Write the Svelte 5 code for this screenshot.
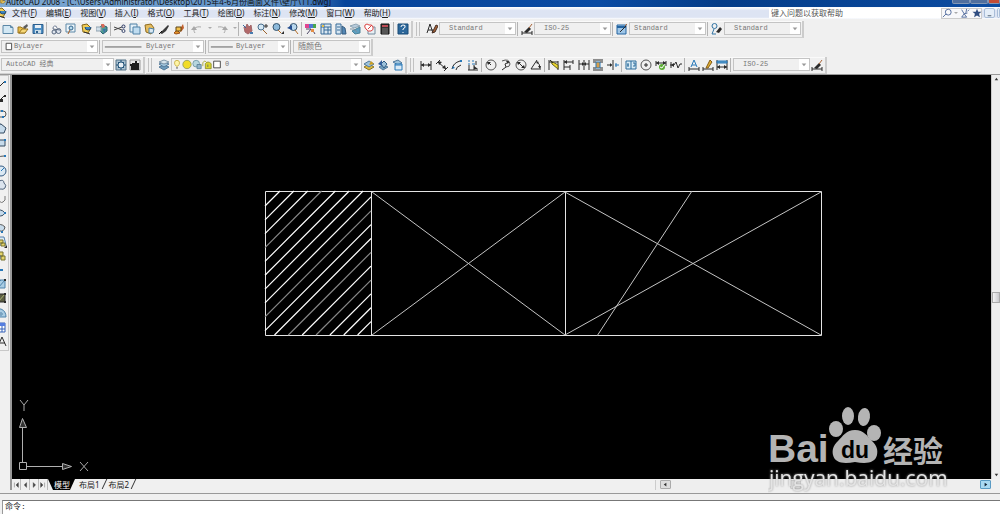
<script lang="ts">
  type Shape = [d: string, fill: string, stroke?: string];

  const ink = '#2b2b2b';
  const blue = '#2878b8';

  // every icon is drawn on a 12 x 12 grid
  const icons: Record<string, Shape[]> = {
    fresh: [['M1 2.5h7.500l2.500 2v6h-10z', '#d3e8f4', '#5b87a6'], ['M8.500 2.500v2h2.500', 'none', '#5b87a6']],
    open: [['M1 10V4h3l1 1h3v5z', '#e8bd48', '#9a741f'], ['M2 10l3-4h6l-3 4z', '#f5d778', '#9a741f'], ['M6 4l4-3 1 2-3 3z', '#5b5b5b']],
    save: [['M1 1.500h10v9h-10z', '#4f8fc4', '#2d5f8d'], ['M3 2h6v3h-6z', '#e8f0f6'], ['M3 7h6v3.500h-6z', '#c9dce8'], ['M4 8h2v2h-2z', '#2d5f8d']],
    plot: [['M3 6a2 2.500 0 1 1 4-1', '#fff', '#707d95'], ['M2 9a2 2 0 1 0 4 0a2 2 0 1 0-4 0M6 8a2.500 2.500 0 1 0 5 0a2.500 2.500 0 1 0-5 0', '#dfe5ee', '#59687f'], ['M3 6l7 1', 'none', '#59687f']],
    preview: [['M1 1h9v8h-9z', '#eaf3f8', '#5f89a8'], ['M4 5a2 2 0 1 0 4 0a2 2 0 1 0-4 0', '#b8dcf0', '#33658c'], ['M5 7l-2 4', 'none', '#a35a20']],
    publish: [['M1 2l5-1 4 4-3 5-5-1z', '#f1cd55', '#82651a'], ['M4 4a3 3 0 1 0 6 0', '#3d83bd', '#244f79'], ['M3 9l6 2', 'none', '#333']],
    globe: [['M2 6l4-4 5 2 0 4-4 3z', '#4e9a91', '#296074'], ['M0 4h5v4h-5z', '#d2e0ea', '#8fa2b0'], ['M5 1h3l1 3-3 1z', '#db6b58'], ['M7 6l3 0-2 4z', '#3b6fae']],
    cut: [['M0 4l8 3M0 7l8-3', 'none', '#444'], ['M8 4a1.500 1.500 0 1 0 3-1a1.500 1.500 0 1 0-3 1M8 8a1.500 1.500 0 1 0 3 0a1.500 1.500 0 1 0-3 0', 'none', '#3e4b72']],
    copy: [['M1 1h7v8h-7z', '#e3eff7', '#4e80a5'], ['M4 4h7v7h-7z', '#bfdcf0', '#4e80a5']],
    paste: [['M1 2l6-1 3 4-3 6-5-2z', '#e6bd5e', '#8e6b20'], ['M5 5l5 1-1 4-4 0z', '#d9e8f2', '#4e80a5']],
    brush: [['M2 10l4-4 4-4 1 1-3 5-4 3z', '#3a3a3a'], ['M1 11l3-3', 'none', '#111']],
    edit: [['M1 10l3-3 3 3-4 1z', '#e6952b', '#9a4f16'], ['M6 7l4-6 1 4-3 4z', '#c2602c'], ['M3 4h5v4h-5z', '#f3c14a', '#5d4417']],
    undo: [['M4 10c-3-4 1-7 6-6', 'none', '#a8a8a8'], ['M0 7l3-4 3 4z', '#a8a8a8']],
    redo: [['M8 10c3-4-1-7-6-6', 'none', '#a8a8a8'], ['M12 7l-3-4-3 4z', '#a8a8a8']],
    pan: [['M2 4l1 5 3 2 4-3-1-6-2 2-2-3-1 3z', '#b26869', '#a0676a'], ['M1 2l3 3', 'none', '#3269a0'], ['M8 9h3v2h-3z', '#487caf']],
    zoom: [['M1 4a3 3 0 1 0 6 0a3 3 0 1 0-6 0', '#d4e8f5', '#496d8c'], ['M6 7l4 4', 'none', '#9b642f'], ['M9 1v4M7 3h4', 'none', '#333']],
    zoomWindow: [['M1 4a3.500 3.500 0 1 0 7 0a3.500 3.500 0 1 0-7 0', '#8dbadb', '#34546f'], ['M6 7l3 3', 'none', '#b36d28'], ['M9 11h3v-3z', ink]],
    zoomBack: [['M3 4a3.500 3.500 0 1 0 7 0a3.500 3.500 0 1 0-7 0', '#b8d7ed', '#34546f'], ['M8 7l3 4', 'none', '#b36d28'], ['M0 5l5-3v5z', '#254f91']],
    props: [['M0 1h4v4h-4z', '#e14590'], ['M4 1h4v4h-4z', '#4e76d2'], ['M8 1h3v4h-3z', '#48a64d'], ['M1 6h5l-4 5M7 6l3 5', 'none', '#4c4665'], ['M6 6h3v3h-3z', '#e48d45']],
    center: [['M1 1h10v10h-10z', '#dbe8f2', '#376b98'], ['M1 4h10M4 1v10M8 4v7M4 7h7', 'none', '#376b98'], ['M2 2h2v2h-2z', '#e7be4a']],
    palettes: [['M1 1h5v10h-5z', '#d7e7f3', '#376b98'], ['M2 4h3M2 7h3', 'none', '#376b98'], ['M7 3l3 2 1 6h-4z', '#5588b5', '#365d80']],
    sheets: [['M1 3l6-2 4 2-6 2z', '#b8ccdc', '#8fa5b4'], ['M3 8l8-4v6l-5 1z', '#5e9ec0', '#4c839a'], ['M1 6h4l3 3', 'none', '#7b8f9f']],
    markup: [['M4 4h7v7h-7z', '#e8f0f5', '#748b9d'], ['M1 2q2-2 4 0q3-1 4 2q1 3-2 4q-3 1-5-2q-2-2-1-4z', '#fff', '#db4141'], ['M4 6l4-4', 'none', '#db4141']],
    calc: [['M2 1h8v10h-8z', '#343434', '#111'], ['M3 2h6v2h-6z', '#bd4b55'], ['M3 6h6M3 8h6M3 10h6', 'none', '#777']],
    help: [['M1 1h10v10h-10z', '#2d689b', '#194a77'], ['M4 4q0-2 2-2q3 0 2 2q0 1-2 2v1M6 9v1', 'none', '#fff']],
    textStyle: [['M1 10l3-9 3 9M2 7h5', 'none', ink], ['M6 10l4-8 2 1-3 6z', '#a86336', '#432e25']],
    dimStyle: [['M1 10h10M1 8v4M11 8v4', 'none', ink], ['M3 9l5-5 2 2-4 4z', ink], ['M8 5l3-4', 'none', '#a86336']],
    tableStyle: [['M1 2h9v9h-9z', '#9fc6e7', '#2464a1'], ['M1 3h9v2h-9z', '#2464a1'], ['M4 9l6-6', 'none', ink], ['M9 3l2-2', 'none', '#a86336']],
    leaderStyle: [['M1 3a2.500 2.500 0 1 0 5 0a2.500 2.500 0 1 0-5 0M3 6l-2 5h4', 'none', '#3274a3'], ['M5 9l4-5 2 2-3 4z', ink]],
    gear: [['M1 1h10v10h-10z', '#a9c0d0', '#547287'], ['M3 6a3 3 0 1 0 6 0a3 3 0 1 0-6 0', '#e8eff4', '#28577b'], ['M6 1v2M6 9v2M1 6h2M9 6h2M3 3l1 1M9 3l-1 1M3 9l1-1M9 9l-1-1', 'none', '#28577b']],
    home: [['M1 1h10v10h-10z', '#e8e8e8', '#999'], ['M1 5h2V4h3V2h2v2h2v7h-8v-4h-1z', '#1d1d1d']],
    layers: [['M1 8l5-2 5 2-5 3z', '#6d9cbd', '#52799a'], ['M1 5l5-2 5 2-5 3z', '#9dc2db', '#52799a'], ['M1 3l5-2 5 2-5 2z', '#d6e5ee', '#8098aa']],
    layerNow: [['M1 8l5-3 5 3-5 3z', '#ddb93f', '#8b7626'], ['M1 5l5-3 5 3-5 3z', '#9dc2db', '#52799a'], ['M8 2l3 3-5 1z', '#cfa020']],
    layerBack: [['M2 8l4-2 5 2-5 3z', '#6d9cbd', '#52799a'], ['M4 5l3-3 3 3-3 4z', '#9dc2db', '#315d83'], ['M1 5l4-4v6z', '#345f9b']],
    layerStates: [['M2 3l5-2 4 3-4 2z', '#9dc2db', '#52799a'], ['M4 5h7v6h-7z', '#dcebf6', blue], ['M4 6h7', 'none', blue]],
    bulb: [['M3 4a3 3 0 1 1 6 0q0 2-2 4h-2q-2-2-2-4', '#fff5a6', '#c6ac3f'], ['M5 9h2v2h-2z', '#8b8b8b']],
    sun: [['M1 6a5 5 0 1 0 10 0a5 5 0 1 0-10 0', '#f2dc27', '#8f9c62']],
    freeze: [['M1 5a4 4 0 1 0 8 0a4 4 0 1 0-8 0', '#b8d6df', '#6c95a5'], ['M6 6h5v5h-5z', '#91b3c9', '#587f98']],
    lock: [['M1 8V4q2-4 5 0', 'none', '#a3a329'], ['M4 5q3-4 7 0v6h-7z', '#d9d42d', '#8f8e28'], ['M7 6v3', 'none', '#666']],
    swatch: [['M2 2h8v8h-8z', '#fff', '#333']],
    linear: [['M1 2v9M11 2v9M1 6h10', 'none', ink], ['M1 6l3-2v4zM11 6l-3-2v4z', ink]],
    aligned: [['M0 5l4-4M8 12l4-4M2 3l8 7', 'none', ink], ['M2 2l4 1-3 3zM10 10l-4-1 3-3z', ink]],
    arc: [['M1 10q1-6 8-8M5 11q0-3 5-5', 'none', ink], ['M1 10l1-3 2 2zM9 1h2v2h-2z', blue]],
    ordinate: [['M1 11h10M2 6v5M7 6v5M9 2v4', 'none', ink], ['M1 2h2M5 2h2M1 5h2M5 5h3', 'none', blue], ['M7 7l4 3h-4z', ink]],
    radius: [['M1 6a5 5 0 1 0 10 0a5 5 0 1 0-10 0', 'none', '#555'], ['M6 6l-3-3', 'none', ink], ['M2 3l4 0-3 3z', ink]],
    jogged: [['M2 2q7-3 8 3q0 3-4 3', 'none', '#555'], ['M2 11l4-3-1-3 4-2', 'none', ink], ['M9 2l-3 0 2 3z', ink]],
    diameter: [['M1 6a5 5 0 1 0 10 0a5 5 0 1 0-10 0', 'none', '#555'], ['M3 3l6 6', 'none', ink], ['M2 3l4 0-3 3zM10 9l-4 0 3-3z', ink]],
    angular: [['M7 1l-6 9h10M7 3q3 2 3 6', 'none', ink], ['M6 2l3 1-2 2zM10 10l-2-3h3z', ink]],
    quick: [['M1 1v10M10 2v9M1 3h9', 'none', ink], ['M3 2l7 4v4l-6-5z', '#f0d92b', '#62601d'], ['M2 1l3 3', 'none', ink]],
    baseline: [['M1 1v10M1 3h9M1 8h6M7 6v5M10 1v4', 'none', ink], ['M1 3l3-2v4z', ink]],
    continue: [['M1 1v10M6 1v10M11 1v10M1 5h10', 'none', ink], ['M6 5l-2-2v4zM6 5l2-2v4z', ink]],
    space: [['M1 1h10M1 11h10M1 3h3M8 3h3M1 9h3M8 9h3', 'none', ink], ['M4 3h4v6h-4z', '#d79d4a', blue]],
    dimBreak: [['M0 6h5M6 1v10', 'none', ink], ['M8 6h4M9 4v4', 'none', blue], ['M3 4l2 2-2 2z', ink]],
    tolerance: [['M1 2h10v8h-10z', '#d7eaf5', '#2d6d9b'], ['M6 2v8M3 4v4M2 6h2M8 4h2v3h-2', 'none', '#2d6d9b']],
    centerMark: [['M1 6a5 5 0 1 0 10 0a5 5 0 1 0-10 0', 'none', '#555'], ['M6 4v4M4 6h4', 'none', ink]],
    inspect: [['M1 2v5M11 2v5M1 4h10', 'none', ink], ['M1 4l3-2v4zM11 4l-3-2v4z', ink], ['M4 8a3 3 0 1 0 6 0a3 3 0 1 0-6 0', '#5cad36'], ['M5 8l2 1 2-3', 'none', '#fff']],
    jogLine: [['M0 6h4l2-3 2 6 2-4h2M1 3v6', 'none', ink], ['M1 6l3-2v4z', ink]],
    dimEdit: [['M1 10h10M1 8v4M11 8v4', 'none', ink], ['M3 8l3-7 3 7M4 6h4', 'none', blue]],
    dimText: [['M1 10h10M1 8v4M11 8v4', 'none', ink], ['M4 9l4-8 2 2-4 6z', '#e0af31', '#835b18']],
    dimUpdate: [['M1 1v10M11 1v10M1 8h10', 'none', ink], ['M1 2h10v2h-10z', '#5c9cc9', blue], ['M1 8l3-2v4zM11 8l-3-2v4z', ink]],
    line: [['M0 11l9-9', 'none', ink], ['M9 1h2v2h-2z', blue]],
    ray: [['M0 11l9-9', 'none', ink], ['M9 1h2v2h-2zM5 5h3v3h-3z', ink]],
    polyline: [['M5 3h3q3 0 3 3t-3 3h-4', 'none', '#555'], ['M6 2h2v2h-2zM7 8h2v2h-2z', blue]],
    polygon: [['M5 2h1l5 4-2 5h-7z', '#c7dbeb', '#344a61']],
    rectangle: [['M1 3h9v6h-9z', '#c7dbeb', '#344a61'], ['M9 2h2v2h-2z', blue]],
    arcDraw: [['M0 10q2-5 9-5', 'none', '#555'], ['M9 4h2v2h-2z', blue]],
    circle: [['M1 6a5 5 0 1 0 10 0a5 5 0 1 0-10 0', '#dbe9f4', '#345b83'], ['M6 6l3-3', 'none', blue]],
    cloud: [['M4 2q5-2 5 2q3 2 1 5q-2 2-4 1q-4 1-4-3z', '#dbe4ee', '#51657c']],
    spline: [['M3 5q2 6 5 4q3-1 2-6', 'none', '#777']],
    ellipse: [['M1 6q4-6 9 0q-4 6-9 0', '#c7dbeb', '#344a61'], ['M9 5h2v2h-2z', blue]],
    ellipseArc: [['M1 5q4-5 9 0q-1 5-5 4', '#c7dbeb', '#555'], ['M6 9h2v2h-2z', blue]],
    insert: [['M2 1h7l2 8h-8z', '#dbe9f4', '#5480aa'], ['M4 4h4v3h-4zM6 7h4v3h-4z', '#e3d36a', '#74702e'], ['M9 12h3v-3z', ink]],
    block: [['M4 2h4v4h-4zM6 6h4v4h-4z', '#e3d36a', '#74702e'], ['M2 5h3v4h-3z', '#c7dbeb', '#51657c']],
    point: [['M5 5h3v2h-3z', blue]],
    hatch: [['M1 2h9v8h-9z', '#a9cce3', '#4e83ab'], ['M3 10l7-8M1 7l5-5', 'none', '#4e83ab'], ['M9 1h2v2h-2z', ink]],
    gradient: [['M1 2h9v8h-9z', '#5b5d42', ink], ['M3 10l7-8', 'none', '#a8ae70'], ['M9 1h2v2h-2zM9 9h2v2h-2z', ink]],
    region: [['M3 2h3q5 2 5 8h-8z', '#a9cce3', '#4e83ab'], ['M5 6h2v2h-2z', '#fff', '#4e83ab']],
    table: [['M0 2h10v9h-10z', '#fff', '#3460b8'], ['M0 2h10v3h-10z', '#557ee0'], ['M7 5v6M0 8h10', 'none', '#3460b8']],
    text: [['M3 11l4-9 4 9M5 8h5', 'none', ink]],
    search: [['M4 5a3.500 3.500 0 1 0 7 0a3.500 3.500 0 1 0-7 0M5 7l-4 4', 'none', '#3f5b93']],
    satellite: [['M2 2l3 5 4-1M8 1l-1 5M5 7l-3 4h6zM9 4l2-2', 'none', '#3f5b93']],
    star: [['M6 1l1.500 3.500h4l-3 2.500 1 4-3.500-2-3.500 2 1-4-3-2.500h4z', '#304d81']]
  };

  const fileGroups = [
    { size: 'w46', names: ['fresh', 'open', 'save'] },
    { size: 'w62', names: ['plot', 'preview', 'publish', 'globe'] },
    { size: 'w76', names: ['cut', 'copy', 'paste', 'brush', 'edit'] },
    { size: 'w50', names: ['undo', 'caret', 'redo', 'caret'] },
    { size: 'w60', names: ['pan', 'zoom', 'zoomWindow', 'zoomBack'] },
    { size: 'w90', names: ['props', 'center', 'palettes', 'sheets', 'markup', 'calc'] },
    { size: 'w18', names: ['help'] }
  ];

  const styles = [
    { icon: 'textStyle', label: 'Text style', value: 'Standard', inset: true },
    { icon: 'dimStyle', label: 'Dimension style', value: 'ISO-25', inset: true },
    { icon: 'tableStyle', label: 'Table style', value: 'Standard', inset: false },
    { icon: 'leaderStyle', label: 'Leader style', value: 'Standard', inset: true }
  ];

  const dimGroups = [
    { size: 'w60', names: ['linear', 'aligned', 'arc', 'ordinate'] },
    { size: 'w60', names: ['radius', 'jogged', 'diameter', 'angular'] },
    { size: 'w76', names: ['quick', 'baseline', 'continue', 'space', 'dimBreak'] },
    { size: 'w60', names: ['tolerance', 'centerMark', 'inspect', 'jogLine'] },
    { size: 'w46', names: ['dimEdit', 'dimText', 'dimUpdate'] }
  ];

  const drawTools = [
    'line', 'ray', 'polyline', 'polygon', 'rectangle', 'arcDraw', 'circle', 'cloud', 'spline', 'ellipse',
    'ellipseArc', 'insert', 'block', 'point', 'hatch', 'gradient', 'region', 'table', 'text'
  ];

  const menus = [
    ['文件', 'F'], ['编辑', 'E'], ['视图', 'V'], ['插入', 'I'], ['格式', 'O'], ['工具', 'T'],
    ['绘图', 'D'], ['标注', 'N'], ['修改', 'M'], ['窗口', 'W'], ['帮助', 'H']
  ];

  // hatch lines run at 45 degrees inside the 106 x 144 box
  const box = { x: 253, y: 116, w: 106, h: 144 };
  const hatch = Array.from({ length: 17 }, (_, i) => {
    const s = 15 + i * 13.85;
    const faint = [3, 8, 11, 13].includes(i);
    const left = Math.max(0, s - box.h);
    const right = Math.min(box.w, s);
    return {
      x1: box.x + left, y1: box.y + s - left,
      x2: box.x + right, y2: box.y + s - right,
      color: faint ? '#888' : '#fff'
    };
  });

  const nav = ['M3 2v6M8 2l-3 3 3 3z', 'M7 2l-3 3 3 3z', 'M4 2l3 3-3 3z', 'M7 2v6M2 2l3 3-3 3z'];
  const tabs = ['模型', '布局1', '布局2'];

  let active = $state('模型');
  let command = $state('');
  let question = $state('');
</script>

{#snippet icon(name: string)}
  <svg class="icon" viewBox="0 0 12 12" aria-hidden="true">
    {#each icons[name] as [d, fill, stroke]}
      <path {d} {fill} stroke={stroke ?? 'none'} />
    {/each}
  </svg>
{/snippet}

{#snippet tool(name: string)}
  {#if name === 'caret'}
    <button class="tool caret" aria-label="more"><svg viewBox="0 0 4 3"><path d="M0 0h4l-2 2z" fill="#aaa" /></svg></button>
  {:else}
    <button class="tool" aria-label={name}>{@render icon(name)}</button>
  {/if}
{/snippet}

{#snippet combo(label: string, value: string, size: string, pad: string)}
  <span class="combo {size}">
    {#if pad === 'color'}
      <svg class="deco" viewBox="0 0 14 12"><path d="M4.500 2.500h6v7h-6z" fill="#fff" stroke="#444" /></svg>
    {:else if pad === 'type'}
      <svg class="deco" viewBox="0 0 46 12"><path d="M2 6.500h40" stroke="#555" /></svg>
    {:else if pad === 'weight'}
      <svg class="deco" viewBox="0 0 30 12"><path d="M2 6.500h24" stroke="#555" /></svg>
    {:else if pad === 'layer'}
      <span class="deco states">
        {#each ['bulb', 'sun', 'freeze', 'lock', 'swatch'] as name}
          {@render icon(name)}
        {/each}
      </span>
    {/if}
    <select class="pad-{pad}" aria-label={label}><option>{value}</option></select>
    <svg class="arrow" viewBox="0 0 9 12"><path d="M2 5h5l-2.500 3z" fill="#999" /></svg>
  </span>
{/snippet}

<div class="app">
  <header class="title">
    {@render icon('open')}
    <span>AutoCAD 2008 - [C:\Users\Administrator\Desktop\2015年4-6月份画面文件\壁厅\11.dwg]</span>
    <div class="window">
      <button aria-label="minimize"></button>
      <button aria-label="restore"></button>
      <button class="close" aria-label="close"></button>
    </div>
  </header>

  <nav class="menu">
    <span class="doc">{@render icon('publish')}</span>
    {#each menus as [name, key]}
      <button>{name}(<u>{key}</u>)</button>
    {/each}
    <input type="text" aria-label="help" placeholder="键入问题以获取帮助" bind:value={question} />
    <div class="info">
      {@render tool('search')}
      {@render tool('caret')}
      {@render tool('satellite')}
      {@render tool('star')}
    </div>
    <button class="mdi" aria-label="minimize drawing"><svg viewBox="0 0 10 10"><path d="M3 7.500h4" stroke="#456" /></svg></button>
    <button class="mdi half" aria-label="restore drawing"></button>
  </nav>

  <div class="bars">
    <div class="row">
      <div class="bar">
        {#each fileGroups as group}
          <div class="group {group.size}">
            {#each group.names as name}{@render tool(name)}{/each}
          </div>
        {/each}
      </div>
      <div class="bar">
        <i class="grip"></i>
        {#each styles as s}
          <div class="group">
            {@render tool(s.icon)}
            {@render combo(s.label, s.value, 'c77', s.inset ? 'deep' : 'none')}
          </div>
        {/each}
      </div>
    </div>

    <div class="row">
      <div class="bar">
        <div class="group">{@render combo('Color', 'ByLayer', 'c96', 'color')}</div>
        <div class="group">{@render combo('Linetype', 'ByLayer', 'c101', 'type')}</div>
        <div class="group">{@render combo('Lineweight', 'ByLayer', 'c80', 'weight')}</div>
        <div class="group">{@render combo('Plot style', '随颜色', 'c77', 'plot')}</div>
      </div>
    </div>

    <div class="row">
      <div class="bar">
        <div class="group">
          {@render combo('Workspace', 'AutoCAD 经典', 'c112', 'none')}
          {@render tool('gear')}
          {@render tool('home')}
        </div>
      </div>
      <div class="bar">
        <i class="grip"></i>
        <div class="group">
          {@render tool('layers')}
          {@render combo('Layer', '0', 'c190', 'layer')}
          {@render tool('layerNow')}
          {@render tool('layerBack')}
          {@render tool('layerStates')}
        </div>
      </div>
      <div class="bar">
        <i class="grip"></i>
        {#each dimGroups as group}
          <div class="group {group.size}">
            {#each group.names as name}{@render tool(name)}{/each}
          </div>
        {/each}
        <div class="group">
          {@render combo('Current dimension style', 'ISO-25', 'c77', 'deep')}
          {@render tool('dimStyle')}
        </div>
      </div>
    </div>
  </div>

  <main>
    <aside>
      {#each drawTools as name}
        {@render tool(name)}
      {/each}
    </aside>

    <section>
      <div class="view">
        <svg class="drawing" viewBox="0 0 979 404">
          <path d="M253.500 116.500h556v144h-556zM359.500 116.500v144M553.500 116.500v144" stroke="#e4e4e4" />
          <path d="M360 117l193 143M360 260l193-143M553 117l256 143M553 260l256-143M680 116l-95 145" stroke="#c4c4c4" />
          {#each hatch as l}
            <line x1={l.x1} y1={l.y1} x2={l.x2} y2={l.y2} stroke={l.color} stroke-width="1.2" />
          {/each}
          <path d="M7.500 387.500h7v7h-7zM10.500 387v-34M15 391.500h36" stroke="#b0b0b0" />
          <path d="M10.500 343.500l-3 9h7zM59.500 391.500l-9-3v6z" fill="#333" stroke="#b0b0b0" />
          <path d="M8 325l4 5 4-5M12 330v6M68 387l8 9M76 387l-8 9" stroke="#a8a8a8" />
        </svg>
        <div class="vscroll">
          <button aria-label="scroll up"><svg viewBox="0 0 9 9"><path d="M3 6h4l-2-3z" fill="#333" /></svg></button>
          <i></i>
          <button aria-label="scroll down"><svg viewBox="0 0 9 9"><path d="M3 3h4l-2 3z" fill="#333" /></svg></button>
        </div>
      </div>

      <footer>
        {#each nav as d, i}
          <button class="nav" aria-label="tab step {i + 1}"><svg viewBox="0 0 10 10"><path {d} fill="#444" stroke="#444" stroke-width="0.500" /></svg></button>
        {/each}
        {#each tabs as tab}
          <button class="tab" class:active={active === tab} onclick={() => (active = tab)}>{tab}</button>
        {/each}
        <div class="hscroll">
          <button aria-label="scroll left"><svg viewBox="0 0 10 8"><path d="M6 2v4l-3-2z" fill="#333" /></svg></button>
          <i></i>
          <button class="hot" aria-label="scroll right"><svg viewBox="0 0 10 8"><path d="M4 2v4l3-2z" fill="#123" /></svg></button>
        </div>
      </footer>
    </section>

    <svg class="mark" viewBox="0 0 180 88">
      <g fill="#b4b4b4">
        <text x="0" y="57" class="latin">Bai</text>
        <ellipse cx="68" cy="24" rx="7" ry="8" />
        <ellipse cx="80" cy="11" rx="6" ry="9" />
        <ellipse cx="96" cy="12" rx="6" ry="9" transform="rotate(8 96 12)" />
        <ellipse cx="106" cy="28" rx="7" ry="8" />
        <path d="M87 25c9 0 12 6 17 11c5 5 6 9 5 14c-2 8-10 9-22 7c-12 2-20 1-22-7c-1-5 0-9 5-14c5-5 8-11 17-11z" />
        <text x="115" y="57" class="han">经验</text>
      </g>
      <text x="73" y="53" class="du">du</text>
      <text x="1" y="81" class="site">jingyan.baidu.com</text>
    </svg>
  </main>

  <div class="command">
    <label for="command">命令:</label>
    <input id="command" type="text" bind:value={command} />
  </div>
</div>

<style>
  :global(body) {
    background: #fff;
  }

  .app {
    overflow: hidden;
    background: #f0f0f0;
    font-family: "Noto Sans", "Noto Sans CJK SC", sans-serif;
    font-size: 8px;
    color: #222;
  }

  button, input, select {
    margin: 0;
    padding: 0;
    border: 0;
    background: none;
    font: inherit;
    color: inherit;
  }

  svg {
    display: block;
    fill: none;
  }

  .icon {
    width: 12px;
    height: 12px;
    flex: none;
  }

  .title {
    display: flex;
    align-items: flex-end;
    height: 7px;
    overflow: hidden;
    background: linear-gradient(90deg, #7ea9d2 0, #5c8fc6 290px, #07449a 345px, #0a4ba3 60%, #043c88 72%, #0b4ca2 100%);
  }

  .title .icon {
    width: 6px;
  }

  .title span {
    font-size: 8px;
    line-height: 10px;
    white-space: nowrap;
    color: #111;
  }

  .window {
    display: flex;
    height: 4px;
    margin: 0 0 auto auto;
  }

  .window button {
    width: 18px;
    border: 1px solid #8297b5;
    border-top: 0;
    border-radius: 0 0 2px 2px;
    background: #506f9e;
  }

  .window .close {
    width: 12px;
    background: #c34c36;
  }

  .menu {
    display: flex;
    align-items: center;
    height: 12px;
    background: linear-gradient(#fff, #dde4f3 30%, #dde4f3 85%, #fff);
  }

  .menu > button {
    margin-right: 9px;
    line-height: 12px;
    white-space: nowrap;
  }

  .doc {
    width: 12px;
    overflow: hidden;
  }

  .doc .icon {
    margin-left: -4px;
  }

  .menu input {
    width: 172px;
    height: 10px;
    margin-left: auto;
    padding-left: 2px;
    box-sizing: border-box;
    background: #fff;
    line-height: 10px;
  }

  .menu input::placeholder {
    color: #555;
    opacity: 1;
  }

  .info {
    display: flex;
    width: 41px;
    height: 11px;
    justify-content: space-between;
    overflow: hidden;
    background: #f8f8fa;
    box-shadow: inset 0 0 0 1px #ccc;
  }

  .info .tool {
    min-width: 11px;
  }

  .info .caret {
    min-width: 5px;
  }

  .info .icon {
    width: 10px;
    height: 10px;
  }

  .menu .mdi {
    width: 11px;
    height: 10px;
    margin: 0 0 0 2px;
    box-sizing: border-box;
    border: 1px solid #a9bdd8;
    border-radius: 2px;
    background: #e4edf8;
  }

  .menu .half {
    width: 3px;
  }

  .bars {
    padding-top: 1px;
    border-bottom: 1px solid #999;
  }

  .row, .bar, .group {
    display: flex;
    align-items: center;
  }

  .row {
    height: 18px;
    gap: 1px;
  }

  .bar {
    height: 17px;
    box-sizing: border-box;
    border-right: 2px solid #ccc;
    border-bottom: 1px solid #d0d0d0;
    box-shadow: inset 0 1px #fafafa;
  }

  .group {
    height: 14px;
    padding: 0 1px;
    box-sizing: border-box;
    justify-content: space-between;
  }

  .group + .group {
    border-left: 1px solid #b4b4b4;
    padding-left: 2px;
  }

  .w18 { width: 18px; }
  .w46 { width: 46px; }
  .w50 { width: 51px; }
  .w60 { width: 63px; }
  .w62 { width: 64px; }
  .w76 { width: 77px; }
  .w90 { width: 92px; }

  .grip {
    width: 2px;
    height: 14px;
    margin: 0 4px 0 2px;
    border: solid #c2c2c2;
    border-width: 0 1px;
  }

  .tool {
    display: flex;
    flex: none;
    justify-content: center;
    min-width: 14px;
  }

  .caret {
    align-self: center;
    min-width: 5px;
  }

  .caret svg {
    width: 4px;
    height: 3px;
  }

  .combo {
    position: relative;
    height: 13px;
    box-sizing: border-box;
    border: 1px solid #c4c4c4;
    background: #f0f0f0;
  }

  .combo select {
    display: block;
    width: 100%;
    height: 11px;
    appearance: none;
    font-family: "Liberation Mono", "Noto Sans CJK SC", monospace;
    font-size: 7px;
    line-height: 11px;
    color: #777;
  }

  .c77 { width: 77px; }
  .c80 { width: 81px; }
  .c96 { width: 97px; }
  .c101 { width: 102px; }
  .c112 { width: 113px; }
  .c190 { width: 191px; }

  .combo .pad-none { padding-left: 4px; }
  .combo .pad-deep { padding-left: 9px; }
  .combo .pad-color { padding-left: 12px; }
  .combo .pad-type { padding-left: 43px; }
  .combo .pad-weight { padding-left: 27px; }
  .combo .pad-layer { padding-left: 53px; }
  .combo .pad-plot { padding-left: 4px; font-size: 8px; }

  .deco, .arrow {
    position: absolute;
    top: 0;
    height: 11px;
    pointer-events: none;
  }

  .deco {
    left: 0;
  }

  .states {
    display: flex;
  }

  .states .icon {
    width: 10px;
    height: 11px;
  }

  .arrow {
    right: 0;
    width: 10px;
    background: #fff;
  }

  main {
    position: relative;
    display: flex;
    background: #f0f0f0;
  }

  aside {
    display: flex;
    flex-direction: column;
    justify-content: space-between;
    align-self: flex-start;
    width: 9px;
    height: 276px;
    box-sizing: border-box;
    padding: 4px 0 3px;
    border: solid #c8c8c8;
    border-width: 1px 1px 1px 0;
    overflow: hidden;
  }

  aside .tool {
    margin-left: -7px;
  }

  section {
    flex: 1;
    min-width: 0;
    margin-left: 1px;
    border-left: 2px solid #999;
  }

  .view {
    display: flex;
  }

  .drawing {
    flex: 1;
    min-width: 0;
    background: #000;
  }

  .vscroll {
    display: flex;
    flex-direction: column;
    justify-content: space-between;
    width: 9px;
    box-sizing: border-box;
    border-left: 1px solid #ccc;
    background: #eee;
  }

  .vscroll i {
    height: 9px;
    margin-top: 40px;
    border: 1px solid #aaa;
    background: linear-gradient(90deg, #f4f4f4, #c8c8cc);
  }

  footer {
    display: flex;
    height: 11px;
  }

  .nav {
    width: 9px;
    border-right: 1px solid #bbb;
  }

  .tab {
    padding: 0 5px 0 6px;
    line-height: 10px;
  }

  .tab:not(.active) {
    position: relative;
    margin-left: -2px;
  }

  .tab:not(.active)::after {
    content: "";
    position: absolute;
    top: 0;
    right: 0;
    height: 10px;
    border-right: 1px solid #333;
    transform: skewX(-25deg);
  }

  .tab.active {
    clip-path: polygon(0 0, 100% 0, calc(100% - 5px) 100%, 5px 100%);
    background: #000;
    color: #fff;
  }

  .hscroll {
    display: flex;
    justify-content: space-between;
    width: 34%;
    margin: 1px 9px 0 auto;
    padding-left: 4px;
    border-left: 1px solid #ccc;
    box-sizing: border-box;
    background: #eee;
  }

  .hscroll button, .hscroll i {
    width: 11px;
    height: 9px;
    box-sizing: border-box;
    border: 1px solid #aaa;
    border-radius: 1px;
    background: #ddd;
  }

  .hscroll i {
    margin-right: 60px;
    border-color: #ccc;
  }

  .hscroll .hot {
    border-color: #5a9bc4;
    background: #a9d9f2;
  }

  .mark {
    position: absolute;
    right: 52px;
    bottom: -3px;
    width: 180px;
    height: 88px;
    pointer-events: none;
  }

  .latin {
    font: bold 39px "Liberation Sans", sans-serif;
  }

  .du {
    font: bold 23px "Liberation Sans", sans-serif;
    fill: #000;
  }

  .han {
    font: bold 30px "Noto Sans CJK SC", sans-serif;
  }

  .site {
    font: 21px "Open Sans", sans-serif;
    fill: #e4e4e4;
    filter: drop-shadow(0 0 1px #999);
  }

  .command {
    display: flex;
    margin-top: 3px;
    padding: 6px 0 0 2px;
    border-top: 1px solid #999;
  }

  .command label, .command input {
    height: 13px;
    border-top: 1px solid #777;
    background: #fff;
    font-family: "Liberation Mono", "Noto Sans CJK SC", monospace;
    line-height: 11px;
  }

  .command label {
    padding-left: 2px;
    border-left: 1px solid #999;
  }

  .command input {
    flex: 1;
    min-width: 0;
    outline: none;
  }
</style>
